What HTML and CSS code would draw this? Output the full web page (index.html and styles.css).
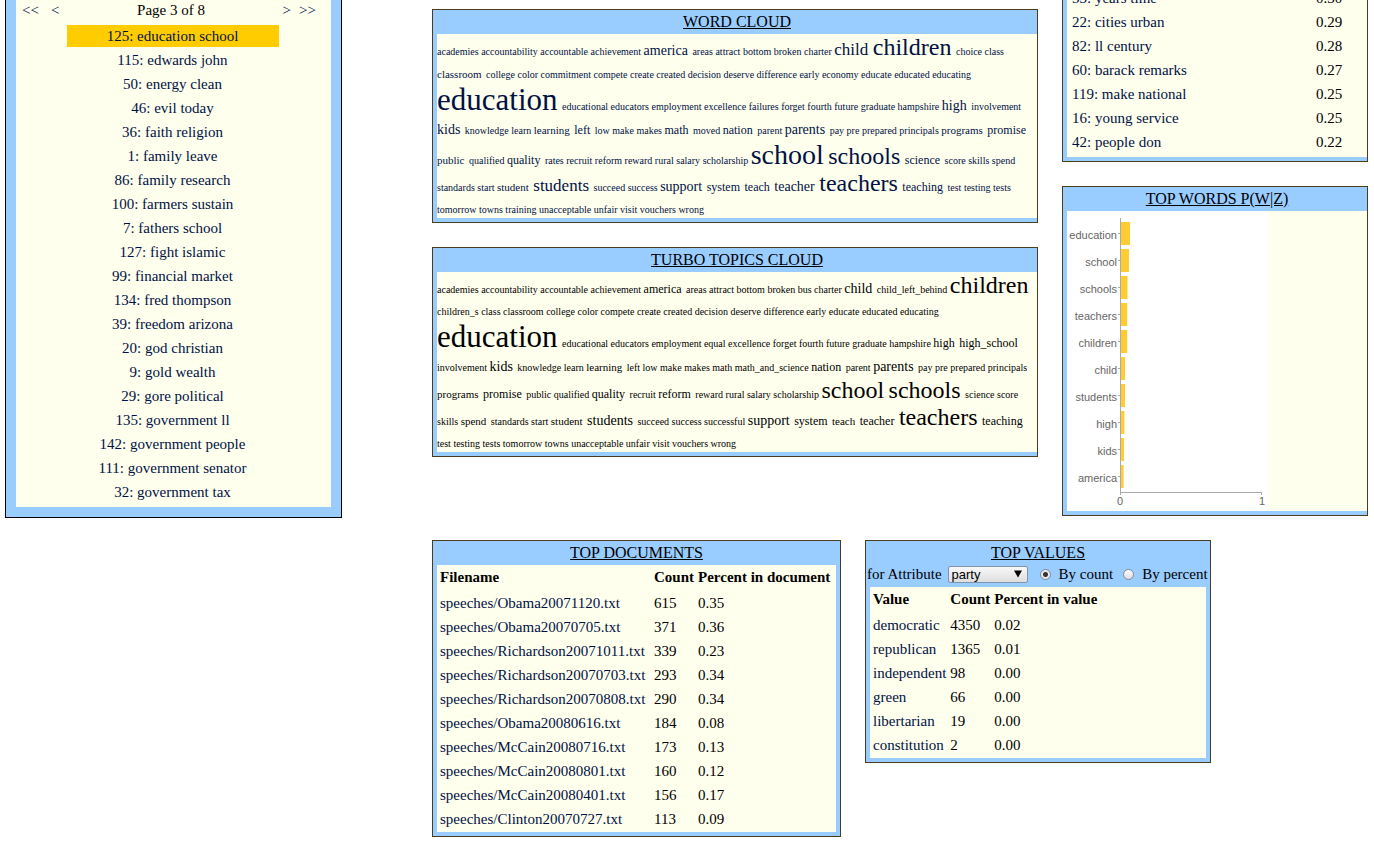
FILE: index.html
```html
<!DOCTYPE html>
<html lang="en">
<head>
<meta charset="utf-8">
<title>Topic browser</title>
<link rel="stylesheet" href="styles.css">
</head>
<body>
<div class="page">
  <nav class="topics">
    <div class="pager">
      <a href="#">&lt;&lt;</a><a href="#">&lt;</a>
      <span class="pager-label">Page 3 of 8</span>
      <a href="#">&gt;</a><a href="#">&gt;&gt;</a>
    </div>
    <ul class="topic-list">
      <li class="selected"><a href="#">125: education school</a></li>
      <li><a href="#">115: edwards john</a></li>
      <li><a href="#">50: energy clean</a></li>
      <li><a href="#">46: evil today</a></li>
      <li><a href="#">36: faith religion</a></li>
      <li><a href="#">1: family leave</a></li>
      <li><a href="#">86: family research</a></li>
      <li><a href="#">100: farmers sustain</a></li>
      <li><a href="#">7: fathers school</a></li>
      <li><a href="#">127: fight islamic</a></li>
      <li><a href="#">99: financial market</a></li>
      <li><a href="#">134: fred thompson</a></li>
      <li><a href="#">39: freedom arizona</a></li>
      <li><a href="#">20: god christian</a></li>
      <li><a href="#">9: gold wealth</a></li>
      <li><a href="#">29: gore political</a></li>
      <li><a href="#">135: government ll</a></li>
      <li><a href="#">142: government people</a></li>
      <li><a href="#">111: government senator</a></li>
      <li><a href="#">32: government tax</a></li>
    </ul>
  </nav>

  <main class="main">
    <div class="upper">
      <div class="clouds">
        <section class="panel flush">
          <h2>WORD CLOUD</h2>
          <div class="content cloud">
            <div><a href="#">academies</a> <a href="#">accountability</a> <a href="#">accountable</a> <a href="#">achievement</a> <a href="#" class="s14">america</a> <a href="#">areas</a> <a href="#">attract</a> <a href="#">bottom</a> <a href="#">broken</a> <a href="#">charter</a> <a href="#" class="s17">child</a> <a href="#" class="s24">children</a> <a href="#">choice</a> <a href="#">class</a></div>
            <div><a href="#" class="s11">classroom</a> <a href="#">college</a> <a href="#">color</a> <a href="#">commitment</a> <a href="#">compete</a> <a href="#">create</a> <a href="#">created</a> <a href="#">decision</a> <a href="#">deserve</a> <a href="#">difference</a> <a href="#">early</a> <a href="#">economy</a> <a href="#">educate</a> <a href="#">educated</a> <a href="#">educating</a></div>
            <div><a href="#" class="s31">education</a> <a href="#">educational</a> <a href="#">educators</a> <a href="#">employment</a> <a href="#">excellence</a> <a href="#">failures</a> <a href="#">forget</a> <a href="#">fourth</a> <a href="#">future</a> <a href="#">graduate</a> <a href="#">hampshire</a> <a href="#" class="s14">high</a> <a href="#">involvement</a></div>
            <div><a href="#" class="s14">kids</a> <a href="#">knowledge</a> <a href="#">learn</a> <a href="#" class="s11">learning</a> <a href="#" class="s12">left</a> <a href="#">low</a> <a href="#">make</a> <a href="#">makes</a> <a href="#" class="s12">math</a> <a href="#">moved</a> <a href="#" class="s12">nation</a> <a href="#">parent</a> <a href="#" class="s14">parents</a> <a href="#">pay</a> <a href="#">pre</a> <a href="#">prepared</a> <a href="#">principals</a> <a href="#" class="s11">programs</a> <a href="#" class="s12">promise</a></div>
            <div><a href="#" class="s11">public</a> <a href="#">qualified</a> <a href="#" class="s12">quality</a> <a href="#">rates</a> <a href="#">recruit</a> <a href="#">reform</a> <a href="#">reward</a> <a href="#">rural</a> <a href="#">salary</a> <a href="#">scholarship</a> <a href="#" class="s28">school</a> <a href="#" class="s24">schools</a> <a href="#" class="s12">science</a> <a href="#">score</a> <a href="#">skills</a> <a href="#">spend</a></div>
            <div><a href="#">standards</a> <a href="#">start</a> <a href="#" class="s11">student</a> <a href="#" class="s17">students</a> <a href="#">succeed</a> <a href="#">success</a> <a href="#" class="s14">support</a> <a href="#" class="s12">system</a> <a href="#" class="s12">teach</a> <a href="#" class="s14">teacher</a> <a href="#" class="s24">teachers</a> <a href="#" class="s12">teaching</a> <a href="#">test</a> <a href="#">testing</a> <a href="#">tests</a></div>
            <div><a href="#">tomorrow</a> <a href="#">towns</a> <a href="#">training</a> <a href="#">unacceptable</a> <a href="#">unfair</a> <a href="#">visit</a> <a href="#">vouchers</a> <a href="#">wrong</a></div>
          </div>
        </section>

        <section class="panel flush">
          <h2>TURBO TOPICS CLOUD</h2>
          <div class="content cloud">
            <div>academies accountability accountable achievement <span class="s12">america</span> areas attract bottom broken bus charter <span class="s14">child</span> child_left_behind <span class="s24">children</span></div>
            <div>children_s class classroom college color compete create created decision deserve difference early educate educated educating</div>
            <div><span class="s31">education</span> educational educators employment equal excellence forget fourth future graduate hampshire <span class="s12">high</span> <span class="s12">high_school</span></div>
            <div>involvement <span class="s14">kids</span> knowledge learn <span class="s11">learning</span> left low make makes math math_and_science <span class="s12">nation</span> parent <span class="s14">parents</span> pay pre prepared principals</div>
            <div><span class="s11">programs</span> <span class="s12">promise</span> public qualified <span class="s12">quality</span> recruit <span class="s12">reform</span> reward rural salary scholarship <span class="s24">school</span> <span class="s24">schools</span> science score</div>
            <div>skills <span class="s11">spend</span> standards start <span class="s11">student</span> <span class="s14">students</span> succeed success successful <span class="s14">support</span> <span class="s12">system</span> <span class="s11">teach</span> <span class="s12">teacher</span> <span class="s24">teachers</span> <span class="s12">teaching</span></div>
            <div>test testing tests tomorrow towns unacceptable unfair visit vouchers wrong</div>
          </div>
        </section>
      </div>

      <div class="side">
        <section class="panel flush continued">
          <div class="content">
            <table class="related">
              <colgroup><col class="related-name"><col></colgroup>
              <tbody>
              <tr><td><a href="#">53: years time</a></td><td>0.30</td></tr>
              <tr><td><a href="#">22: cities urban</a></td><td>0.29</td></tr>
              <tr><td><a href="#">82: ll century</a></td><td>0.28</td></tr>
              <tr><td><a href="#">60: barack remarks</a></td><td>0.27</td></tr>
              <tr><td><a href="#">119: make national</a></td><td>0.25</td></tr>
              <tr><td><a href="#">16: young service</a></td><td>0.25</td></tr>
              <tr><td><a href="#">42: people don</a></td><td>0.22</td></tr>
              </tbody>
            </table>
          </div>
        </section>

        <section class="panel flush">
          <h2>TOP WORDS P(W|Z)</h2>
          <div class="content">
            <svg class="chart" width="200" height="300" viewBox="0 0 200 300" role="img" aria-label="Top words">
              <g fill="#ffcc33">
                <rect x="54" y="11" width="9" height="23"/>
                <rect x="54" y="38" width="8" height="23"/>
                <rect x="54" y="65" width="6.5" height="23"/>
                <rect x="54" y="92" width="6.2" height="23"/>
                <rect x="54" y="119" width="6.2" height="23"/>
                <rect x="54" y="146" width="4" height="23"/>
                <rect x="54" y="173" width="4" height="23"/>
                <rect x="54" y="200" width="3.4" height="23"/>
                <rect x="54" y="227" width="3" height="23"/>
                <rect x="54" y="254" width="2.6" height="23"/>
              </g>
              <path d="M53.5 7V284M53 281.500H194.500V284M51 22.500h2M51 49.500h2M51 76.500h2M51 103.500h2M51 130.500h2M51 157.500h2M51 184.500h2M51 211.500h2M51 238.500h2M51 265.500h2" fill="none" stroke="#aaa"/>
              <g class="chart-labels" text-anchor="end">
                <text x="50" y="28">education</text>
                <text x="50" y="55">school</text>
                <text x="50" y="82">schools</text>
                <text x="50" y="109">teachers</text>
                <text x="50" y="136">children</text>
                <text x="50" y="163">child</text>
                <text x="50" y="190">students</text>
                <text x="50" y="217">high</text>
                <text x="50" y="244">kids</text>
                <text x="50" y="271">america</text>
              </g>
              <g class="chart-labels" text-anchor="middle">
                <text x="53" y="294">0</text>
                <text x="195" y="294">1</text>
              </g>
            </svg>
          </div>
        </section>
      </div>
    </div>

    <div class="lower">
      <section class="panel documents">
        <h2>TOP DOCUMENTS</h2>
        <div class="content">
          <table>
            <colgroup><col class="doc-name"><col class="count"><col></colgroup>
            <thead><tr><th>Filename</th><th>Count</th><th>Percent in document</th></tr></thead>
            <tbody>
            <tr><td><a href="#">speeches/Obama20071120.txt</a></td><td>615</td><td>0.35</td></tr>
            <tr><td><a href="#">speeches/Obama20070705.txt</a></td><td>371</td><td>0.36</td></tr>
            <tr><td><a href="#">speeches/Richardson20071011.txt</a></td><td>339</td><td>0.23</td></tr>
            <tr><td><a href="#">speeches/Richardson20070703.txt</a></td><td>293</td><td>0.34</td></tr>
            <tr><td><a href="#">speeches/Richardson20070808.txt</a></td><td>290</td><td>0.34</td></tr>
            <tr><td><a href="#">speeches/Obama20080616.txt</a></td><td>184</td><td>0.08</td></tr>
            <tr><td><a href="#">speeches/McCain20080716.txt</a></td><td>173</td><td>0.13</td></tr>
            <tr><td><a href="#">speeches/McCain20080801.txt</a></td><td>160</td><td>0.12</td></tr>
            <tr><td><a href="#">speeches/McCain20080401.txt</a></td><td>156</td><td>0.17</td></tr>
            <tr><td><a href="#">speeches/Clinton20070727.txt</a></td><td>113</td><td>0.09</td></tr>
            </tbody>
          </table>
        </div>
      </section>

      <section class="panel values">
        <h2>TOP VALUES</h2>
        <form class="filter">
          <label for="attribute">for Attribute</label>
          <span class="select">
            <select id="attribute"><option>party</option></select>
            <svg width="8" height="8" viewBox="0 0 8 8" aria-hidden="true"><path d="M0 0.500H8L4 7.500Z"/></svg>
          </span>
          <input type="radio" name="order" id="by-count" checked>
          <label for="by-count">By count</label>
          <input type="radio" name="order" id="by-percent">
          <label for="by-percent">By percent</label>
        </form>
        <div class="content">
          <table>
            <colgroup><col class="value-name"><col class="count"><col></colgroup>
            <thead><tr><th>Value</th><th>Count</th><th>Percent in value</th></tr></thead>
            <tbody>
            <tr><td><a href="#">democratic</a></td><td>4350</td><td>0.02</td></tr>
            <tr><td><a href="#">republican</a></td><td>1365</td><td>0.01</td></tr>
            <tr><td><a href="#">independent</a></td><td>98</td><td>0.00</td></tr>
            <tr><td><a href="#">green</a></td><td>66</td><td>0.00</td></tr>
            <tr><td><a href="#">libertarian</a></td><td>19</td><td>0.00</td></tr>
            <tr><td><a href="#">constitution</a></td><td>2</td><td>0.00</td></tr>
            </tbody>
          </table>
        </div>
      </section>
    </div>
  </main>
</div>
</body>
</html>
```

FILE: styles.css
```css
* { box-sizing: border-box; }

body {
  margin: 0;
  background: #fff;
  color: #000;
  font: 15px/22px "Liberation Serif", serif;
}

a { color: #001144; text-decoration: none; }

.page {
  display: flex;
  align-items: flex-start;
  gap: 90px;
  padding: 0 6px 0 5px;
  overflow: hidden;
}

/* Topic index */
.topics {
  flex: 0 0 337px;
  padding: 0 10px 10px;
  border: 1px solid #000;
  border-top: 0;
  background: #99ccff;
}

.pager {
  display: flex;
  gap: 12px;
  height: 25px;
  padding: 0 15px 0 6px;
  line-height: 20px;
  background: #ffffee;
}

.pager a:last-child { margin-left: -4px; }
.pager-label { flex: 1; text-align: center; }

.topic-list {
  display: flex;
  flex-direction: column;
  align-items: center;
  gap: 2px;
  margin: 0;
  padding: 0 2px 4px 0;
  list-style: none;
  background: #ffffee;
}

.topic-list li { width: 212px; text-align: center; }
.selected { background: #ffcc00; }

/* Panels */
.main {
  display: flex;
  flex: 1;
  flex-direction: column;
  gap: 24px;
  min-width: 0;
}

.upper { display: flex; gap: 24px; }

.clouds, .side {
  display: flex;
  flex-direction: column;
  justify-content: flex-start;
  gap: 24px;
}

.clouds { flex: 1; min-width: 0; padding-top: 9px; }
.side { flex: 0 0 306px; }

.panel {
  padding: 0 4px 4px;
  border: 1px solid #4a3c1c;
  background: #99ccff;
}

.flush { padding-right: 0; }
.continued { margin-top: -15px; border-top: 0; }

.panel h2 {
  margin: 0;
  font-size: 16px;
  font-weight: normal;
  line-height: 24px;
  text-align: center;
  text-decoration: underline;
}

.content { background: #ffffee; }

/* Word clouds */
.cloud {
  padding-top: 2px;
  font-size: 10px;
  line-height: 22px;
  white-space: nowrap;
}

.cloud div:last-child { height: 19px; }

.s11, .s12, .s14, .s17, .s24, .s28, .s31 { margin-right: 2px; }
.s11 { font-size: 11px; }
.s12 { font-size: 12px; }
.s14 { font-size: 14px; line-height: 24px; }
.s17 { font-size: 17px; line-height: 20px; }
.s24 { font-size: 24px; line-height: 22px; }
.s28 { font-size: 28px; line-height: 26px; }
.s31 { font-size: 31px; line-height: 28px; }

/* Tables */
table { border-spacing: 2px; }
th, td { height: 22px; padding: 0 1px; text-align: left; white-space: nowrap; }
th { height: 23px; line-height: 20px; vertical-align: top; }

.related { margin-left: 2px; padding-bottom: 2px; }
.related-name { width: 242px; }
.doc-name { width: 212px; }
.value-name { width: 75px; }
.count { width: 42px; }

/* Bar chart */
.chart { display: block; background: #fff; }
.chart-labels { fill: #666; font: 11px "Liberation Sans", sans-serif; }

/* Lower row */
.lower { display: flex; align-items: flex-start; gap: 24px; }
.documents { flex: 0 0 409px; }
.values { flex: 0 0 346px; }

.filter {
  display: flex;
  align-items: center;
  height: 22px;
  margin-right: -4px;
  margin-left: -3px;
  padding-bottom: 4px;
  white-space: nowrap;
}

.select { position: relative; display: flex; margin: 0 12px 0 6px; }

.select select {
  width: 80px;
  height: 17px;
  padding: 0 3px;
  border: 1px solid #8094ad;
  border-radius: 2px;
  background: linear-gradient(#f8f8f8, #dedede);
  color: #000;
  font: 13px/15px "Liberation Sans", sans-serif;
  appearance: none;
}

.select svg { position: absolute; top: 4px; right: 6px; pointer-events: none; }

.filter input {
  width: 11px;
  height: 11px;
  margin: 0 8px 0 0;
  border: 1px solid #889;
  border-radius: 50%;
  background: linear-gradient(#fff, #ddd);
  appearance: none;
}

.filter input:checked {
  background: radial-gradient(circle, #333 0 2px, #e8e8e8 3px);
}

.filter input + label { margin-right: 10px; }
.filter label:last-child { margin-right: 0; }
```
